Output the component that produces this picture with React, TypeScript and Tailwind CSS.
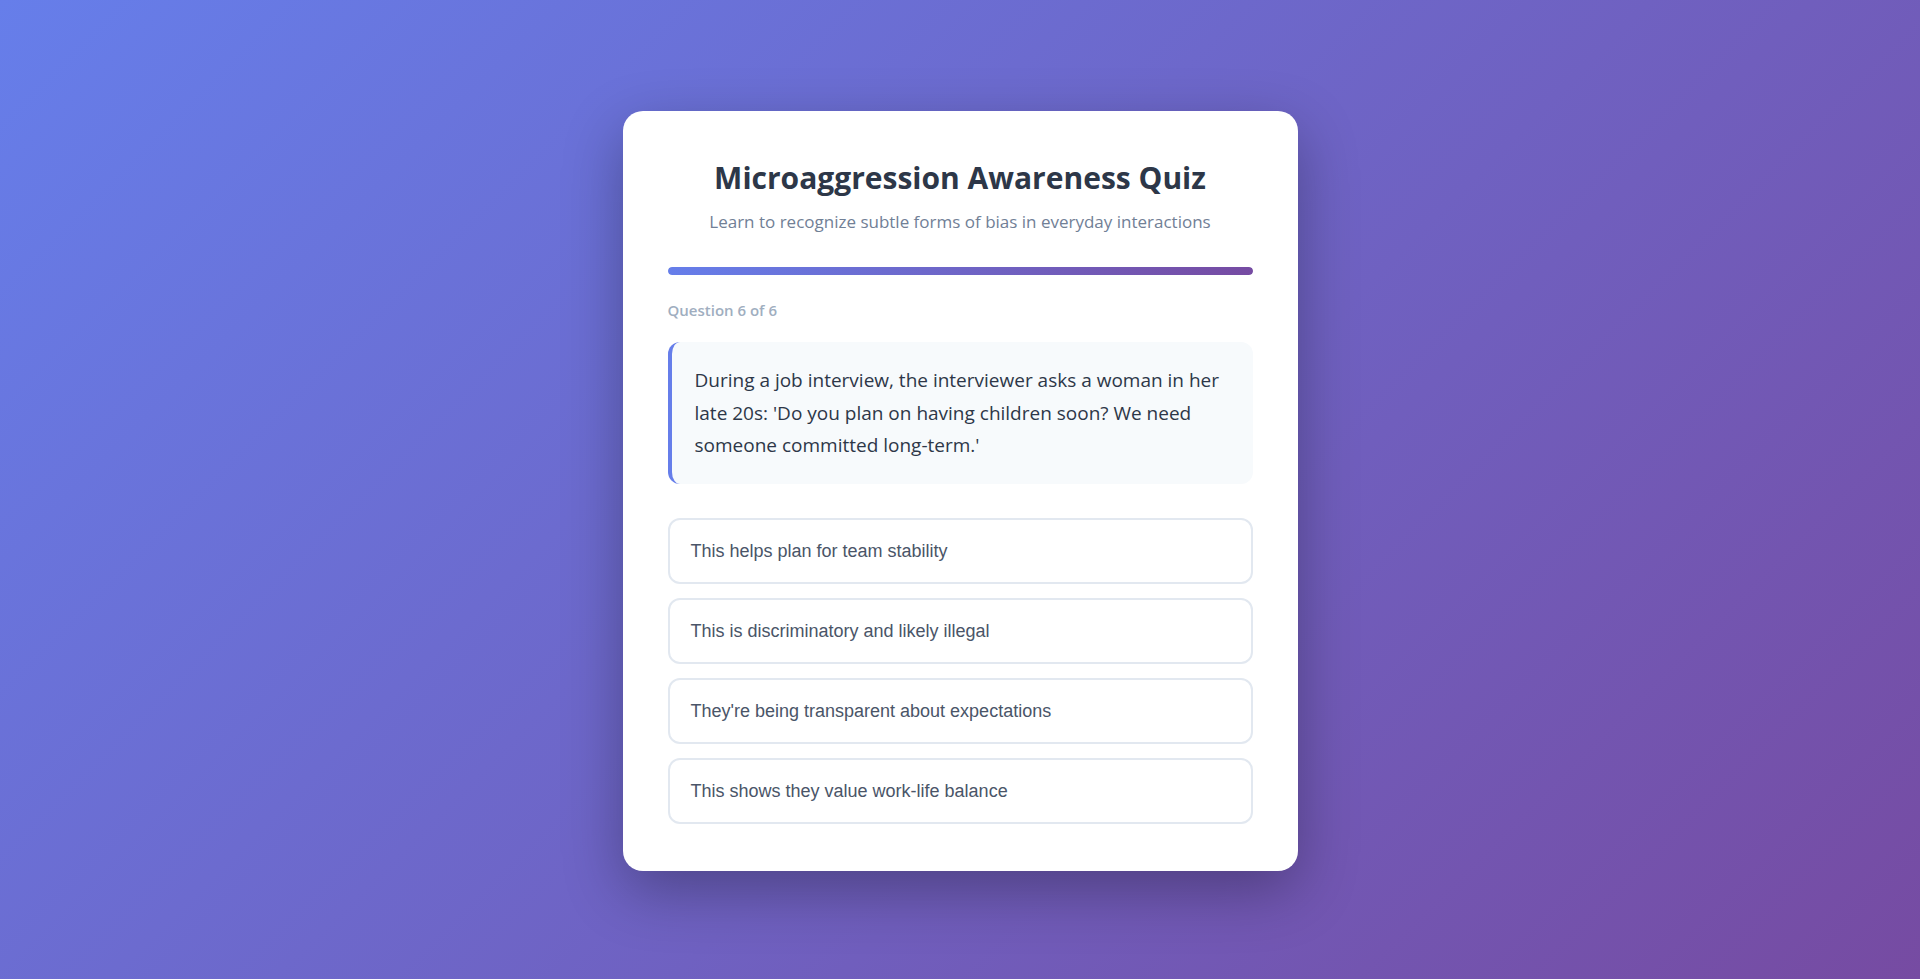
import React, { useState } from 'react';

const question = {
    index: 6,
    total: 6,
    text: "During a job interview, the interviewer asks a woman in her late 20s: 'Do you plan on having children soon? We need someone committed long-term.'",
    options: [
        'This helps plan for team stability',
        'This is discriminatory and likely illegal',
        "They're being transparent about expectations",
        'This shows they value work-life balance'
    ]
};

const App: React.FC = () => {
    const [selected, setSelected] = useState<number | null>(null);

    return (
        <div className="min-h-screen w-full flex items-center justify-center pt-[3px] bg-[linear-gradient(135deg,#667eea_0%,#764ba2_100%)] font-['Open_Sans',sans-serif]">
            <div className="w-[675px] bg-white rounded-[20px] px-[45px] pt-[45px] pb-[47px] shadow-[0_20px_60px_rgba(0,0,0,0.3)]">
                {/* Header */}
                <h1 className="text-center text-[30px] leading-[44px] font-bold text-[#2d3748]">
                    Microaggression Awareness Quiz
                </h1>
                <p className="mt-[10px] text-center text-[17px] leading-[24px] text-[#718096]">
                    Learn to recognize subtle forms of bias in everyday interactions
                </p>

                {/* Progress */}
                <div className="mt-[33px] h-2 w-full rounded-full bg-[#e2e8f0] overflow-hidden">
                    <div
                        className="h-full rounded-full bg-[linear-gradient(90deg,#667eea_0%,#764ba2_100%)]"
                        style={{ width: `${(question.index / question.total) * 100}%` }}
                    />
                </div>

                <div className="mt-[25px] text-[15px] leading-5 font-semibold text-[#a0aec0]">
                    Question {question.index} of {question.total}
                </div>

                {/* Scenario */}
                <div className="mt-[22px] rounded-xl border-l-4 border-[#667eea] bg-[#f7fafc] pl-[23px] pr-6 py-[22px]">
                    <p className="text-[19px] leading-[32.4px] text-[#2d3748]">{question.text}</p>
                </div>

                {/* Options */}
                <div className="mt-[34px] flex flex-col gap-[14px]">
                    {question.options.map((opt, i) => (
                        <button
                            key={i}
                            onClick={() => setSelected(i)}
                            className={`w-full text-left rounded-xl border-2 bg-white px-[21px] py-5 text-[18px] leading-[22px] text-[#4a5568] font-['Liberation_Sans',Arial,sans-serif] transition-colors ${
                                selected === i ? 'border-[#667eea]' : 'border-[#e2e8f0]'
                            }`}
                        >
                            {opt}
                        </button>
                    ))}
                </div>
            </div>
        </div>
    );
};

export default App;
